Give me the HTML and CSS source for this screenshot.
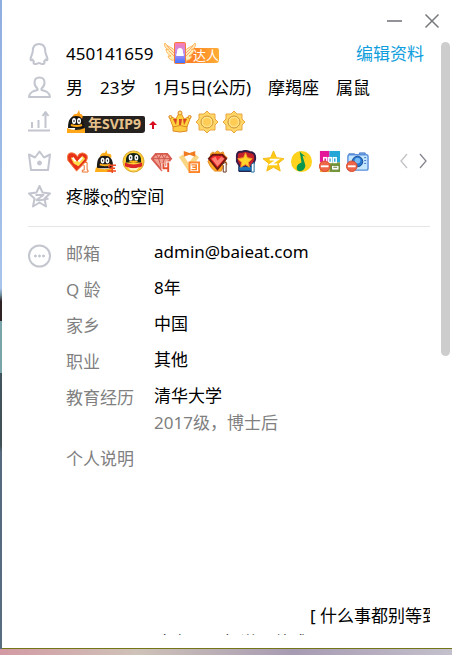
FILE: index.html
```html
<!DOCTYPE html>
<html lang="zh-CN">
<head>
<meta charset="utf-8">
<meta name="viewport" content="width=device-width, initial-scale=1">
<title>个人资料</title>
<link rel="stylesheet" href="styles.css">
</head>
<body>
<div class="desktop">
<main class="window">
  <header class="titlebar">
    <button class="win-btn" type="button" aria-label="最小化"><svg width="16" height="16" viewBox="0 0 16 16"><path d="M1 8h15" stroke="#919398" stroke-width="2"/></svg></button>
    <button class="win-btn" type="button" aria-label="关闭"><svg width="16" height="16" viewBox="0 0 16 16"><path d="M1.500 1.500l13 13M14.500 1.500l-13 13" stroke="#77797d" stroke-width="1.500"/></svg></button>
  </header>
  <div class="viewport">
    <div class="content">
      <section class="summary">
        <div class="row">
          <svg class="line-icon" viewBox="0 0 24 24"><path d="M11 2C6.500 2 4.800 5 4.800 9C4.800 12 2.500 14.500 2.500 17.500C2.600 19 4 18 4.500 17.500C4.800 18.500 5.300 19 6 19.500C4.500 21.300 6 22 8 22C9.500 22 10 21 11 21S12.500 22 14 22C16 22 17.500 21.300 16 19.500C16.700 19 17.200 18.500 17.500 17.500C18 18 19.400 19 19.500 17.500C19.500 14.500 17.200 12 17.200 9C17.200 5 15.500 2 11 2Z"/></svg>
          <span class="account">450141659</span>
          <svg class="talent" width="56" height="24" viewBox="0 0 56 24">
            <defs><linearGradient id="tag"><stop offset="0" stop-color="#ff7920"/><stop offset="1" stop-color="#ffad35"/></linearGradient><linearGradient id="card" x2="0" y2="1"><stop offset="0" stop-color="#ff7aaa"/><stop offset=".5" stop-color="#bc91f6"/><stop offset="1" stop-color="#3675ff"/></linearGradient></defs>
            <path d="M25 6h28q2 0 2 2v10q0 3-3 3H22z" fill="url(#tag)"/>
            <path d="M11 18c-4 1-6-1-7-4l3 0C3 12 2 9 2 7l3 1C1 6 0 4 1 1c2 4 6 3 10 8zM21 18c4 1 6-1 7-4l-3 0c4-2 5-5 5-7l-3 1c4-2 5-4 4-7-2 4-6 3-10 8z" fill="#fff0b8" stroke="#ffb45b"/>
            <path d="M3 4l7 7M5 9l5 5M29 4l-7 7M27 9l-5 5" stroke="#ffa173"/>
            <rect x="10.500" y="0.500" width="11" height="21" rx="1" fill="url(#card)" stroke="#f77b38"/>
            <path d="M16 6c-3 0-3 3-3 5-2 3 0 3 0 3h6s2 0 0-3c0-2 0-5-3-5" fill="#fff"/>
            <text x="29" y="18" class="tag-text">达人</text>
          </svg>
          <a class="edit" href="#edit">编辑资料</a>
        </div>
        <div class="row">
          <svg class="line-icon" viewBox="0 0 24 24"><path d="M11.500 1.500c-3.500 0-5 2.200-5 5 0 2.500 1 4.500 3 6v1.500c-4 1-8 2-8.500 7h21c-.5-5-4.500-6-8.500-7v-1.500c2-1.500 3-3.500 3-6 0-2.800-1.500-5-5-5z"/></svg>
          <div class="facts"><span>男</span><span>23岁</span><span>1月5日(公历)</span><span>摩羯座</span><span>属鼠</span></div>
        </div>
        <div class="row">
          <svg class="line-icon" viewBox="0 0 24 24"><path d="M0 20.500h22M4 18v-6M10.500 18v-8M17.500 18V3M14.500 6l3-4 3 4"/></svg>
          <div class="levels">
            <svg class="vip" width="80" height="24" viewBox="0 0 80 24">
              <path d="M12 6h65q2 0 2 2v12q0 3-3 3H8z" fill="#24211f"/>
              <path d="M6 7q2-4 5-3l2-4 1 4q4 0 2 5z" fill="#ff9e17"/><path d="M2 18C2 9 5 6 10 6s8 3 8 12z" fill="#171514"/><path d="M1 18q9 4 18 0v5H1z" fill="#ffa719"/><ellipse cx="8" cy="11" rx="2" ry="3" fill="#fff"/><ellipse cx="13" cy="11" rx="2" ry="3" fill="#fff"/><path d="M8 10v2M13 10v2" stroke="#111"/><path d="M5 15q6 2 11 0" stroke="#ffa719" stroke-width="2" fill="none"/>
              <text x="22" y="19" class="vip-text">年SVIP9</text>
            </svg>
            <svg class="rise" width="8" height="24" viewBox="0 0 8 24"><path d="M4 11L0 15h3v4h2v-4h3z" fill="#d80b1d"/></svg>
            <svg width="24" height="24" viewBox="0 0 24 24"><path d="M5 17L1 6l7 3 4-8 4 8 7-3-4 11z" fill="#ffd23d" stroke="#e38b20"/><path d="M5 9l3 6 1-6zM11 9h3l-1 6h-2zM19 9l-3 6-1-6z" fill="#d84924"/><path d="M5 17q7-3 14 0v4q-7 2-14 0z" fill="#ffcb42" stroke="#dc8a27"/><g fill="#ffe27c" stroke="#dc8a27"><circle cx="12" cy="3" r="2"/><circle cx="2.500" cy="7" r="1.500"/><circle cx="21.500" cy="7" r="1.500"/></g></svg>
            <svg width="24" height="24" viewBox="0 0 24 24"><path d="M9 4l3-3 3 3h5v5l3 3-3 3v5h-5l-3 3-3-3H4v-5l-3-3 3-3V4z" fill="#ffd768" stroke="#e9a43e"/><circle cx="12" cy="12" r="6" fill="#ffe38a" stroke="#cf912f"/><circle cx="12" cy="12" r="4" fill="#ffcd56"/></svg>
            <svg width="24" height="24" viewBox="0 0 24 24"><path d="M9 4l3-3 3 3h5v5l3 3-3 3v5h-5l-3 3-3-3H4v-5l-3-3 3-3V4z" fill="#ffd768" stroke="#e9a43e"/><circle cx="12" cy="12" r="6" fill="#ffe38a" stroke="#cf912f"/><circle cx="12" cy="12" r="4" fill="#ffcd56"/></svg>
          </div>
        </div>
        <div class="row row-badges">
          <svg class="line-icon" viewBox="0 0 24 24"><path d="M1 5.500l2 15.500h17l2-15.500-6 3-4.500-6-4.500 6z"/><circle cx="11.500" cy="14" r="2" class="dot"/></svg>
          <div class="badges">
            <svg viewBox="0 0 24 24"><path d="M11 22L2 11Q0 2 7 3q4 1 5 4 1-4 5-4 8 1 4 9z" fill="#e83218" stroke="#f37b41"/><path d="M5 8q3-1 5 3l2 1 5-6 3 3-7 8-5-3z" fill="#ffdc4b"/><path d="M7 8l3 4M17 8l-4 4" stroke="#fff" stroke-width="2"/><path d="M17 15l3-2h2v8h1v2h-6v-2h2v-5z" fill="#fff" stroke="#ed6d25"/></svg>
            <svg viewBox="0 0 24 24"><path d="M6 7q2-5 5-4l2-3 1 4q5-1 4 4z" fill="#ffae1d"/><path d="M3 19C3 9 5 6 11 6s9 3 9 13z" fill="#1d1916"/><path d="M2 18q9 4 18 0v5H1z" fill="#ffad18"/><ellipse cx="9" cy="11" rx="2" ry="3" fill="#fff"/><ellipse cx="14" cy="11" rx="2" ry="3" fill="#fff"/><path d="M9 10v2M14 10v2" stroke="#111"/><path d="M6 15q6 2 11 0" fill="none" stroke="#ffae1d" stroke-width="2"/><path d="M17 15l-2 3m2-2h6m-7 3h6m-8 3h9m-4-6v8" stroke="#ee4b24" stroke-width="1.500"/></svg>
            <svg viewBox="0 0 24 24"><circle cx="12" cy="12" r="11" fill="#ffce32" stroke="#d6a331"/><path d="M4 13q-1-10 8-10t8 10z" fill="#152117"/><path d="M3 13q9 4 18 0v4q-9 4-18 0z" fill="#dc2528"/><path d="M6 18q6 2 12 0l-3 3H9z" fill="#fff3c8"/><ellipse cx="9" cy="8" rx="2" ry="3" fill="#fff"/><ellipse cx="15" cy="8" rx="2" ry="3" fill="#fff"/><path d="M9 7v2M15 7v2" stroke="#111"/><path d="M7 12q5 3 10 0-5-2-10 0" fill="#ffb219"/></svg>
            <svg viewBox="0 0 24 24"><path d="M2 9l4-5h12l4 5-10 12z" fill="#f3a090" stroke="#d85c50" stroke-width="2"/><path d="M3 9h18M6 4l3 5 3-5 3 5 3-5M9 9l3 10 3-10" fill="none" stroke="#cc544b"/><path d="M14 14v5h5v-7m0 0v11" fill="none" stroke="#fff" stroke-width="4"/><path d="M14 14v5h5v-6m0 0v10" fill="none" stroke="#e65031" stroke-width="2"/></svg>
            <svg viewBox="0 0 24 24"><path d="M3 6l8 12 9-12" fill="none" stroke="#f8d684" stroke-width="5"/><path d="M6 1l6 2 6-2v6l-6-2-6 2z" fill="#f17b20"/><rect x="12" y="13" width="10" height="10" fill="#fff" stroke="#ff862c" stroke-width="2"/><path d="M14 15.500h5v5h-5m1-2.500h4" fill="none" stroke="#f78327" stroke-width="1.500"/></svg>
            <svg viewBox="0 0 24 24"><path d="M5 4l2-2 2 1 3-2 3 2 3-1 1 3 3 3-2 3 2 4-4 2-2 5H9l-4-4-3-6 2-3z" fill="#ffac23" stroke="#e58a25"/><path d="M3 9l4-4h10l4 4-9 11z" fill="#f32c2d" stroke="#701711" stroke-width="2"/><path d="M6 9l4-2 2 4 4-4 3 2-7 8z" fill="#ff8273"/><path d="M17 15l3-2h1v10h-3v-7z" fill="#fff" stroke="#64301a"/></svg>
            <svg viewBox="0 0 24 24"><path d="M3 6q0-5 5-4 4-2 8 0 7 0 6 8l-3 7v5H6v-5l-3-5z" fill="#c4202a" stroke="#351b46" stroke-width="2"/><path d="M5 17h15v5H5z" fill="#1b73bc" stroke="#1d2855"/><path d="M12 3l2 5 5 1-4 4 1 5-4-3-5 3 1-5-4-4 6-1z" fill="#ffd42b" stroke="#f5942a"/><path d="M18 15l3-2v10h-3z" fill="#fff" stroke="#16679e"/></svg>
            <svg viewBox="0 0 24 24"><path d="M12 1l3 7 8 1-6 5 2 8-7-4-7 4 2-8-6-5 8-1z" fill="#ffcb16" stroke="#f6b817" stroke-linejoin="round"/><path d="M8 10h8l-7 5h7" fill="none" stroke="#fff" stroke-width="2"/></svg>
            <svg viewBox="0 0 24 24"><circle cx="12" cy="12" r="11" fill="#ffd21e"/><path d="M12 13L10 1c2 4 6 4 7 8-1-2-2-3-4-3l3 10c0 7-9 8-9 3 0-4 3-5 5-6z" fill="#08964e"/></svg>
            <svg viewBox="0 0 24 24"><path d="M2 1h10v12H2z" fill="#e5189a"/><path d="M12 1h11v12H12z" fill="#24a6d6"/><path d="M2 13h10v10H2z" fill="#f3a33a"/><path d="M12 13h11v10H12z" fill="#77983b"/><g fill="none" stroke="#fff" stroke-width="1.500"><rect x="6" y="8" width="3" height="5"/><rect x="11" y="8" width="3" height="5"/><rect x="16" y="8" width="3" height="5"/></g><path d="M14 16h8v5h-8zM16 18h4" fill="#fff" stroke="#5d7c26"/><circle cx="7" cy="17" r="5.500" fill="#ef6547" stroke="#d84b2b"/><path d="M3 17h8" stroke="#fff" stroke-width="2"/></svg>
            <svg viewBox="0 0 24 24"><path d="M3 7V4h6v3M14 5V3h6v2" fill="#78aee9" stroke="#4779c5"/><rect x="2" y="5" width="21" height="16" rx="2" fill="#c5e6ff" stroke="#5b8fdc" stroke-width="1.500"/><circle cx="12" cy="12" r="5.500" fill="#2675ce" stroke="#17498f"/><circle cx="12" cy="11" r="3" fill="#75baf2"/><path d="M19 8h2m-2 3h2m-2 3h2" stroke="#3973bd"/><circle cx="6" cy="17" r="5.500" fill="#ef6547" stroke="#d84b2b"/><path d="M2 17h8" stroke="#fff" stroke-width="2"/></svg>
          </div>
          <div class="pager">
            <button class="page-btn" type="button" aria-label="上一页"><svg width="14" height="16" viewBox="0 0 14 16"><path d="M11 1L5 8l6 7" fill="none" stroke="#c1c2c6" stroke-width="1.300"/></svg></button>
            <button class="page-btn" type="button" aria-label="下一页"><svg width="14" height="16" viewBox="0 0 14 16"><path d="M4 1l6 7-6 7" fill="none" stroke="#85878f" stroke-width="1.300"/></svg></button>
          </div>
        </div>
        <div class="row row-space">
          <svg class="line-icon" viewBox="0 0 24 24"><path d="M11.500 1l3 6.500 7.500 1-5.500 5 1.500 8-6.500-4-6.500 4L6.500 13.500 1 8.500 8.500 7.500zM7.500 10h8l-7 5q4 1 12-1.500"/></svg>
          <span>疼滕ღ的空间</span>
        </div>
      </section>
      <section class="details">
        <svg class="line-icon" viewBox="0 0 24 24"><circle cx="11.500" cy="12" r="10.500"/><g class="dot"><circle cx="7.500" cy="12" r="1"/><circle cx="11.500" cy="12" r="1"/><circle cx="15.500" cy="12" r="1"/></g></svg>
        <dl class="fields">
          <dt>邮箱</dt><dd>admin@baieat.com</dd>
          <dt>Q 龄</dt><dd>8年</dd>
          <dt>家乡</dt><dd>中国</dd>
          <dt>职业</dt><dd>其他</dd>
          <dt>教育经历</dt><dd>清华大学<p class="sub">2017级，博士后</p></dd>
          <dt class="about">个人说明</dt><dd class="about message"><p class="first">[ 什么事都别等到</p><p>才应不&nbsp; 时&nbsp; 说不他成 ?</p></dd>
        </dl>
      </section>
    </div>
    <div class="track"><div class="thumb"></div></div>
  </div>
</main>
</div>
</body>
</html>
```
FILE: styles.css
```css
* {
  box-sizing: border-box;
}

body {
  margin: 0;
  font: 17px/24px "Noto Sans", "Noto Sans CJK SC", "DejaVu Sans", sans-serif;
  color: #000;
}

p, dl, dd {
  margin: 0;
}

svg {
  display: block;
  flex: none;
}

/* The wallpaper shows along the left and bottom edges of the window. */
.desktop {
  height: 100vh;
  padding: 0 0 6px 2px;
  background:
    linear-gradient(90deg, #d39aa4, #cfc2b8 30%, #a79bb3 65%, #c4c0cc) bottom / 100% 6px no-repeat,
    linear-gradient(#8faee0, #a8c4eb 44%, #6d8c9c 45%, #302326 46%, #302326 49%, #78a4aa 49%, #78a4aa 57%, #42545c 57%, #405057 68%, #566a7f 69%, #596d81);
}

.window {
  display: flex;
  flex-direction: column;
  height: 100%;
  background: #fff;
  border-bottom: 1px solid #747516;
}

.titlebar {
  display: flex;
  justify-content: flex-end;
  align-items: flex-end;
  gap: 22px;
  flex: none;
  height: 37px;
  padding: 0 12px 8px 0;
}

.win-btn, .page-btn {
  padding: 0;
  border: 0;
  background: none;
  cursor: pointer;
}

.viewport {
  display: flex;
  flex: 1;
  min-height: 0;
  padding: 0 2px 13px 26px;
  gap: 11px;
}

.content {
  flex: 1;
  min-width: 0;
  overflow: hidden;
}

.track {
  flex: none;
  width: 9px;
  padding-top: 5px;
}

.thumb {
  height: 53%;
  border-radius: 5px;
  background: #cdcdcd;
}

.summary {
  padding-bottom: 15px;
  border-bottom: 1px solid #e6e6e6;
}

.row {
  display: flex;
  align-items: center;
  height: 34px;
  white-space: nowrap;
}

.row-badges {
  height: 44px;
}

.row-space {
  height: 28px;
}

.line-icon {
  width: 24px;
  height: 24px;
  margin-right: 14px;
  fill: none;
  stroke: #c3c6cf;
  stroke-width: 2;
  stroke-linejoin: round;
}

.dot {
  fill: #c3c6cf;
  stroke-width: 1;
}

.talent {
  margin-left: 10px;
}

.tag-text {
  font-size: 13px;
  fill: #fff;
}

.edit {
  margin-left: auto;
  padding-right: 6px;
  color: #109edc;
  text-decoration: none;
}

.facts {
  display: flex;
  gap: 17px;
}

.levels {
  display: flex;
  gap: 3px;
}

.vip-text {
  font: bold 14px "Noto Sans", "Noto Sans CJK SC", sans-serif;
  fill: #e7c18b;
}

.rise {
  margin: 0 8px 0 0;
}

.badges {
  display: flex;
  gap: 5px;
}

.badges svg {
  width: 23px;
  height: 23px;
}

.pager {
  display: flex;
  gap: 6px;
  margin-left: auto;
}

.details {
  display: flex;
  align-items: flex-start;
  padding-top: 7px;
}

.details .line-icon {
  margin-top: 10px;
}

.fields {
  display: grid;
  grid-template-columns: 88px 1fr;
  flex: 1;
  min-width: 0;
  line-height: 36px;
}

dt {
  padding-top: 2px;
  height: 36px;
  color: #808080;
}

.sub {
  line-height: 18px;
  color: #808080;
}

.about {
  margin-top: 7px;
}

.message {
  min-width: 0;
  padding-top: 163px;
  line-height: 27px;
  white-space: nowrap;
}

.first {
  text-indent: 156px;
}
```
